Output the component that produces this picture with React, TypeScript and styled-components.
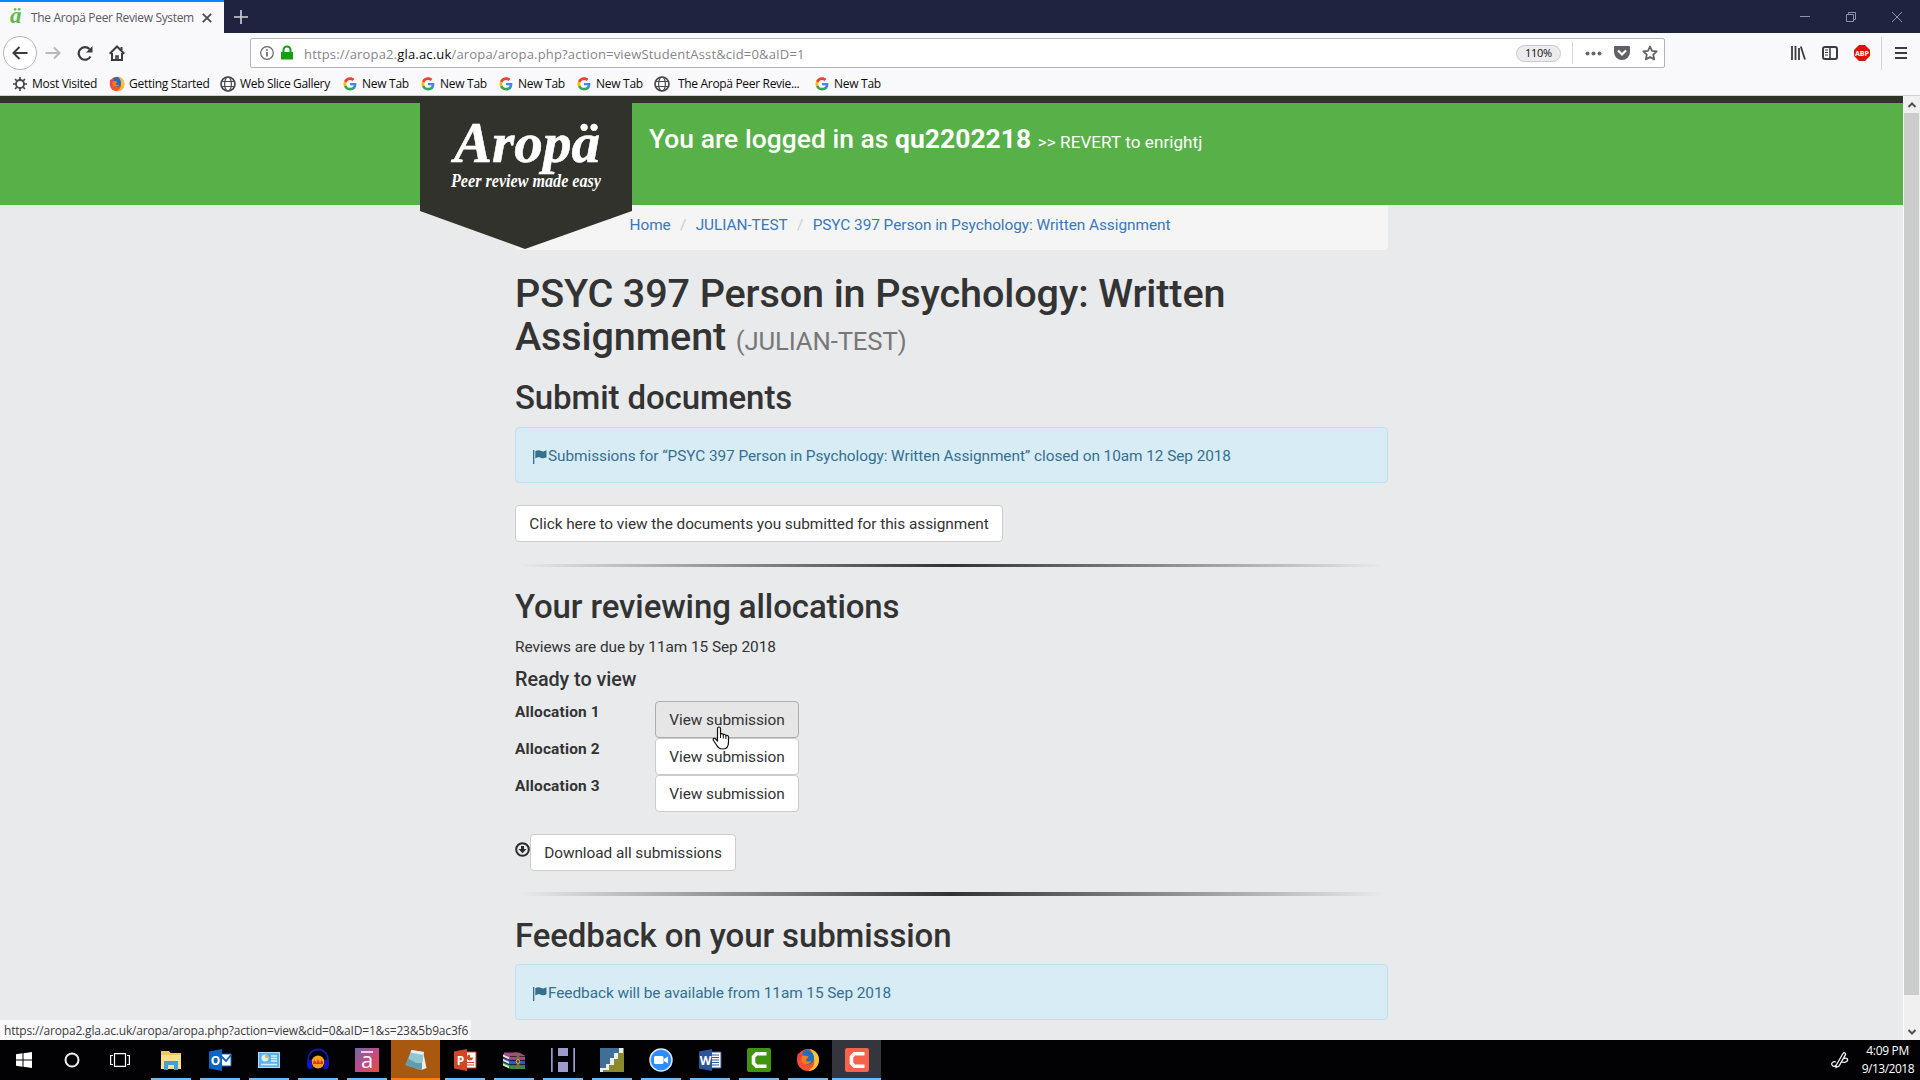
import React from 'react';
import styled, { createGlobalStyle } from 'styled-components';

const Global = createGlobalStyle`
  * { box-sizing: border-box; }
  body { margin: 0; background: #e8eaeb; overflow: hidden; }
  svg { display: block; flex: none; }
`;

const UI = `'Open Sans', 'Noto Sans', sans-serif`;

const Screen = styled.div`
  width: 1920px;
  height: 1080px;
  display: flex;
  flex-direction: column;
  overflow: hidden;
  font-family: Roboto, sans-serif;
`;

/* ---------- browser chrome ---------- */
const TitleBar = styled.div`
  height: 33px;
  flex: none;
  background: #202340;
  display: flex;
  justify-content: space-between;
`;
const TabStrip = styled.div`
  display: flex;
  align-items: center;
`;
const Tab = styled.div`
  width: 224px;
  height: 33px;
  border-top: 2px solid #0a84ff;
  background: #f9f9fb;
  display: flex;
  align-items: center;
  padding: 0 12px 0 10px;
`;
const Favicon = styled.span`
  width: 21px;
  font: italic bold 23px/24px 'Liberation Serif', serif;
  color: #5bb947;
  margin-top: -4px;
`;
const UiText = styled.span<{ $size?: number; $ls?: number; $color?: string }>`
  font-family: ${UI};
  font-size: ${(p) => p.$size ?? 12}px;
  letter-spacing: ${(p) => p.$ls ?? 0}px;
  color: ${(p) => p.$color ?? '#0c0c0d'};
  white-space: pre;
  line-height: 18px;
`;
const TabTitle = styled(UiText)`
  width: 171px;
  margin-top: 1px;
`;
const NewTab = styled.div`
  padding-left: 10px;
`;
const WindowControls = styled.div`
  display: flex;
  align-items: center;
  gap: 36px;
  padding: 1px 18px 0 0;
`;
const NavBar = styled.div`
  height: 39px;
  flex: none;
  background: #f9f9fb;
  display: flex;
  align-items: center;
  padding: 1px 12px 0 3px;
`;
const BackButton = styled.div`
  width: 34px;
  height: 34px;
  border: 1px solid #b5b5b8;
  border-radius: 50%;
  background: #fff;
  display: flex;
  align-items: center;
  justify-content: center;
`;
const NavIcons = styled.div`
  display: flex;
  gap: 16px;
  padding-left: 8px;
  width: 213px;
`;
const UrlBar = styled.div`
  width: 1415px;
  height: 30px;
  border: 1px solid #b4b4b8;
  border-radius: 2px;
  background: #fff;
  display: flex;
  align-items: center;
  padding: 0 6px 0 9px;
`;
const UrlText = styled(UiText)`
  flex: 1;
  padding: 1px 0 0 4px;
  b { font-weight: 400; color: #0c0c0d; }
`;
const Zoom = styled.div`
  width: 45px;
  height: 17px;
  border: 1px solid #c9c9cc;
  border-radius: 9px;
  background: #ececef;
  display: flex;
  align-items: center;
  justify-content: center;
`;
const Divider = styled.div<{ $h: number; $m: string }>`
  width: 1px;
  height: ${(p) => p.$h}px;
  margin: ${(p) => p.$m};
  background: #d5d5d8;
`;
const ToolIcons = styled.div`
  display: flex;
  align-items: center;
  margin-left: auto;
  gap: 16px;
`;
const Bookmarks = styled.div`
  height: 24px;
  flex: none;
  background: #f9f9fb;
  border-bottom: 1px solid #d0d0d3;
  display: flex;
  padding-left: 12px;
`;
const Bookmark = styled.div<{ $w: number; $gap?: number }>`
  width: ${(p) => p.$w}px;
  display: flex;
  align-items: center;
  gap: ${(p) => p.$gap ?? 4}px;
`;

/* ---------- web page ---------- */
const Viewport = styled.div`
  position: relative;
  height: 944px;
  flex: none;
  display: flex;
  background: #e8eaeb;
`;
const Page = styled.div`
  position: relative;
  width: 1903px;
  overflow: hidden;
  letter-spacing: -0.06px;
`;
const Banner = styled.header`
  height: 109px;
  border-top: 7px solid #32322c;
  background: #58b148;
  padding: 20px 0 0 649px;
  color: #fff;
  white-space: nowrap;
`;
const LoggedIn = styled.div`
  font-size: 26.4px;
  line-height: 32px;
  font-weight: 500;
  letter-spacing: 0.05px;
  b { font-weight: 700; }
`;
const Revert = styled.span`
  font-size: 17.1px;
  font-weight: 400;
`;
const LogoMark = styled.svg`
  position: absolute;
  left: 420px;
  top: 0;
  letter-spacing: 0;
`;
const Content = styled.main`
  width: 873px;
  margin-left: 515px;
  color: #333;
  font-size: 15.4px;
  line-height: 22px;
`;
const Breadcrumb = styled.nav`
  height: 45px;
  background: #f5f5f6;
  border-radius: 0 0 4px 4px;
  padding: 9px 0 0 114.500px;
  display: flex;
  white-space: pre;
  color: #ccc;
  a { color: #3a78b9; }
  span { width: 25px; text-align: center; }
`;
const H1 = styled.h1`
  margin: 22px 0 0;
  height: 86px;
  font-size: 39.6px;
  line-height: 43px;
  font-weight: 500;
  letter-spacing: -0.13px;
  small { font-size: 25.7px; font-weight: 400; color: #777; }
`;
const H2 = styled.h2<{ $mt: number }>`
  margin: ${(p) => p.$mt}px 0 0;
  height: 36px;
  font-size: 33px;
  line-height: 36px;
  font-weight: 500;
  letter-spacing: -0.11px;
`;
const Alert = styled.div<{ $mt: number }>`
  margin-top: ${(p) => p.$mt}px;
  height: 56px;
  border: 1px solid #bce0ee;
  border-radius: 4px;
  background: #d8ecf6;
  color: #35708f;
  display: flex;
  align-items: center;
  padding: 2px 0 0 16px;
  letter-spacing: -0.07px;
`;
const Button = styled.button<{ $w: number; $hover?: boolean }>`
  width: ${(p) => p.$w}px;
  height: 37px;
  padding: 0;
  border: 1px solid ${(p) => (p.$hover ? '#adadad' : '#ccc')};
  border-radius: 4px;
  background: ${(p) => (p.$hover ? '#e6e6e6' : '#fff')};
  font: 15.4px/22px Roboto, sans-serif;
  letter-spacing: -0.06px;
  color: #333;
  display: block;
`;
const ButtonRow = styled.div<{ $mt: number }>`
  margin-top: ${(p) => p.$mt}px;
  display: flex;
`;
const Rule = styled.div<{ $mt: number; $h: number }>`
  margin-top: ${(p) => p.$mt}px;
  height: ${(p) => p.$h}px;
  background: linear-gradient(to right, rgba(40, 40, 42, 0) 0.5%, rgba(40, 40, 42, 0.95) 50%, rgba(40, 40, 42, 0) 99.5%);
`;
const Due = styled.p`
  margin: 11px 0 0;
`;
const H4 = styled.h4`
  margin: 11px 0 0;
  font-size: 19.8px;
  line-height: 22px;
  font-weight: 500;
`;
const Allocations = styled.dl`
  margin: 10px 0 0;
  display: grid;
  grid-template-columns: 140px 144px;
  grid-auto-rows: 37px;
  dt { font-weight: 700; line-height: 22px; letter-spacing: 0.18px; }
  dd { margin: 0; }
`;
const Hand = styled.svg`
  position: absolute;
  left: 712px;
  top: 630px;
`;
const StatusUrl = styled.div`
  position: absolute;
  left: 0;
  bottom: 0;
  width: 471px;
  height: 20px;
  padding: 2px 0 0 4px;
  background: #f9f9fb;
  display: flex;
`;
const Scrollbar = styled.div`
  width: 17px;
  background: #f0f0f1;
  border-left: 1px solid #fafafa;
  display: flex;
  flex-direction: column;
  justify-content: space-between;
  align-items: flex-start;
`;
const Thumb = styled.div`
  width: 15px;
  height: 882px;
  margin-bottom: 28px;
  background: #cbcccc;
`;

/* ---------- taskbar ---------- */
const Taskbar = styled.footer`
  height: 40px;
  flex: none;
  background: #020204;
  display: flex;
`;
const SystemButtons = styled.div`
  display: flex;
  width: 146px;
`;
const SystemButton = styled.div`
  width: 48px;
  display: flex;
  align-items: center;
  justify-content: center;
`;
const TaskButton = styled.div<{ $bg?: string; $bar?: string; $wide?: boolean }>`
  width: 49px;
  display: flex;
  flex-direction: column;
  align-items: center;
  justify-content: space-between;
  padding-top: 8px;
  background: ${(p) => p.$bg ?? 'transparent'};
  &::after {
    content: '';
    width: ${(p) => (p.$wide ? 49 : 40)}px;
    height: 2px;
    background: ${(p) => p.$bar ?? '#76b9ed'};
  }
`;
const Tray = styled.div`
  margin-left: auto;
  display: flex;
  align-items: center;
  gap: 13px;
  padding-right: 6px;
`;
const Clock = styled.div`
  display: flex;
  flex-direction: column;
  align-items: flex-end;
`;
const Time = styled(UiText)`
  padding-right: 5px;
`;

const GoogleG = () => (
  <svg width="16" height="16" viewBox="0 0 48 48">
    <path fill="#4285F4" d="M43 24.500c0-1.500-.1-2.600-.4-3.800H24v7.400h10.900c-.5 2.500-2 4.700-4.200 6.200v5.100h6.700C41 36 43 30.800 43 24.500z" />
    <path fill="#34A853" d="M24 43.500c5.400 0 9.900-1.800 13.300-4.900l-6.700-5c-1.800 1.200-4 1.900-6.600 1.900-5.100 0-9.500-3.400-11-8.100H6.200v5.200C9.500 39.100 16.200 43.500 24 43.500z" />
    <path fill="#FBBC05" d="M13 27.400a11.600 11.600 0 0 1 0-7.500v-5.200H6.200a19.600 19.600 0 0 0 0 17.900z" />
    <path fill="#EA4335" d="M24 11.800c2.900 0 5.500 1 7.600 3l5.800-5.700C33.900 5.800 29.400 4 24 4 16.200 4 9.500 8.400 6.200 14.800L13 20c1.500-4.700 5.900-8.200 11-8.200z" />
  </svg>
);
const Globe = () => (
  <svg width="16" height="16" viewBox="0 0 16 16" fill="none" stroke="#4a4a4f">
    <circle cx="8" cy="8" r="7" strokeWidth="1.700" />
    <ellipse cx="8" cy="8" rx="3.400" ry="7" strokeWidth="1.200" />
    <path d="M1.500 5.500h13M1.500 10.500h13" strokeWidth="1.200" />
  </svg>
);
const Firefox = ({ size }: { size: number }) => (
  <svg width={size} height={size} viewBox="0 0 24 24">
    <circle cx="12" cy="12" r="11" fill="#f4512c" />
    <path d="M14 1c6 1.500 9.300 6 9 11.500C22.500 19 17.500 23 12 23c5-3 7-7 6-12-.6-4-2.500-7-4-10z" fill="#ffc22e" />
    <path d="M7 3c4-2 9-1 10.500 4 1.500 5-1 9.500-5.500 9.500-3 0-5-1.500-5.500-3.500l4-1.500-4-3z" fill="#1a6fc4" />
    <path d="M6 8c2-1 3 0 5 0s2 1.500 0 2.500c-1.500.8-1 2.500.5 3 1.500.4 3-.5 4-1-1 3-4 4.500-7 3.500S5 12 6 8z" fill="#f57c1f" />
    <path d="M2 5c1 1 2 1 4 1L3 14C1 11 1 8 2 5z" fill="#ee3f4d" />
  </svg>
);
const Gear = () => (
  <svg width="16" height="16" viewBox="0 0 16 16" fill="none" stroke="#4a4a4f">
    <circle cx="8" cy="8" r="4" strokeWidth="1.800" />
    <path d="M8 1v3M8 12v3M1 8h3M12 8h3M3 3l2.200 2.200M10.800 10.800L13 13M3 13l2.200-2.200M10.800 5.200L13 3" strokeWidth="1.700" />
  </svg>
);
const Flag = () => (
  <svg width="16" height="15" viewBox="0 0 16 15" fill="#35708f">
    <path d="M1 1h1.300v14H1zM3.300 2.300c2-1.500 4-1.300 5.500-.5 1.700.9 3.500.8 5.700-.5v7c-2 1.300-4 1.300-5.700.5-1.500-.7-3.500-.7-5.500.6z" />
  </svg>
);

const bookmarks: Array<[string, string, number, number]> = [
  ['gear', 'Most Visited', 97, -0.28],
  ['fox', 'Getting Started', 111, -0.28],
  ['globe', 'Web Slice Gallery', 122, -0.34],
  ['g', 'New Tab', 78, -0.28],
  ['g', 'New Tab', 78, -0.28],
  ['g', 'New Tab', 78, -0.28],
  ['g', 'New Tab', 78, -0.28],
  ['globe', 'The Aropä Peer Revie...', 160, -0.32],
  ['g', 'New Tab', 78, -0.28],
];
const bookmarkIcon: Record<string, React.ReactNode> = {
  gear: <Gear />,
  fox: <Firefox size={16} />,
  globe: <Globe />,
  g: <GoogleG />,
};

const Camtasia = ({ color }: { color: string }) => (
  <svg width="24" height="24" viewBox="0 0 24 24">
    <rect width="24" height="24" rx="2" fill={color} />
    <path d="M19.500 5.700H9.500l-3 3v6.600l3 3h10" fill="none" stroke="#fff" strokeWidth="3.600" />
  </svg>
);

const Office = ({ color, letter, word }: { color: string; letter: string; word?: boolean }) => (
  <svg width="24" height="24" viewBox="0 0 24 24">
    <path d="M12 4h11v16H12z" fill="#fff" stroke={color} />
    {word ? (
      <path d="M14 7h7M14 9.500h7M14 12h7M14 14.500h7M14 17h7" stroke={color} strokeWidth="1.200" />
    ) : (
      <g>
        <path d="M17 6.500a3 3 0 1 0 3 3h-3z" fill={color} />
        <path d="M14 14.500h7M14 17h7" stroke={color} strokeWidth="1.200" />
      </g>
    )}
    <path d="M1 3.500L14 1v22L1 20.500z" fill={color} />
    <text x="7.500" y="16.500" fontFamily="Open Sans, sans-serif" fontWeight="700" fontSize="12" fill="#fff" textAnchor="middle">{letter}</text>
  </svg>
);

const apps: Array<{ icon: React.ReactNode; bg?: string; bar?: string }> = [
  {
    icon: (
      <svg width="24" height="24" viewBox="0 0 24 24">
        <path d="M2 3h8l1.500 2H22v16H2z" fill="#f0c95c" />
        <path d="M2 7h20v14H2z" fill="#fbe08a" />
        <path d="M5 22v-9h14v9h-4v-5H9v5z" fill="#3fa0dc" />
      </svg>
    ),
  },
  {
    icon: (
      <svg width="24" height="24" viewBox="0 0 24 24">
        <path d="M12 6h11v12H12z" fill="#fff" stroke="#0a64c4" />
        <path d="M13 8l5 5 5-6" stroke="#0a64c4" strokeWidth="1.800" fill="none" />
        <path d="M1 3.500L14 1v22L1 20.500z" fill="#0a64c4" />
        <text x="7.500" y="16.500" fontFamily="Open Sans, sans-serif" fontWeight="700" fontSize="12" fill="#fff" textAnchor="middle">O</text>
      </svg>
    ),
  },
  {
    icon: (
      <svg width="24" height="24" viewBox="0 0 24 24">
        <rect x="1.500" y="4.500" width="21" height="15" fill="#58b4ee" stroke="#a8dcfa" />
        <circle cx="8" cy="10" r="3.500" fill="#d9f0fd" />
        <path d="M8 10V6.500A3.500 3.500 0 0 1 11.500 10z" fill="#f2b04a" />
        <path d="M14 8h6M14 10.500h6M14 13h6M4 16.500h16" stroke="#d9f0fd" strokeWidth="1.300" />
      </svg>
    ),
  },
  {
    icon: (
      <svg width="24" height="24" viewBox="0 0 24 24">
        <circle cx="12" cy="14" r="6.500" fill="#f6a21c" />
        <path d="M7 14l1.500-2 2 3 1.500-4 2 4 1.500-3 1.500 2v2H7z" fill="#e0301e" />
        <path d="M2.500 15C.500 7 6 1.500 12 1.500S23.500 7 21.500 15" fill="none" stroke="#1418a8" strokeWidth="1.800" />
        <path d="M1 13c2-2.500 4-1.500 4.500 0l1.500 7c-3 2.500-7 1-6-7zM23 13c-2-2.500-4-1.500-4.500 0L17 20c3 2.500 7 1 6-7z" fill="#1414c0" />
      </svg>
    ),
  },
  {
    icon: (
      <svg width="24" height="24" viewBox="0 0 24 24">
        <defs>
          <linearGradient id="ink" x1="0" y1="0" x2="1" y2="1">
            <stop offset="0" stopColor="#6e6aa8" />
            <stop offset=".5" stopColor="#c04b86" />
            <stop offset="1" stopColor="#e2503c" />
          </linearGradient>
        </defs>
        <rect width="24" height="24" fill="url(#ink)" />
        <text x="12" y="19.500" fontFamily="Open Sans, sans-serif" fontSize="22" fill="#fff" textAnchor="middle">a</text>
        <path d="M6 4h12" stroke="#fff" strokeWidth="1.500" />
      </svg>
    ),
  },
  {
    bg: '#a8590f',
    bar: '#ff7d0a',
    icon: (
      <svg width="24" height="24" viewBox="0 0 24 24">
        <path d="M19 3l3.500 17-5 2z" fill="#e8eef0" />
        <path d="M7.500 2L20 4l-3.500 18L1.500 17z" fill="#8fc6d2" />
        <path d="M7.500 2L20 4l-.8 3L6.500 4.500z" fill="#e4f1f2" />
        <path d="M1.500 17L4 10.500l8 4.500 6 0-1.500 7z" fill="#5f9eae" />
      </svg>
    ),
  },
  { icon: <Office color="#d24625" letter="P" /> },
  {
    icon: (
      <svg width="24" height="24" viewBox="0 0 24 24">
        <path d="M2 4.500h15l6 3v4.500H8L1 9z" fill="#9c4f86" />
        <path d="M1 9.500l7 3h15v4H8l-7-3z" fill="#3355c0" />
        <path d="M1 14l7 3h15v4H8l-7-3.500z" fill="#2e8f3c" />
        <path d="M1 6.500l6 2.700v2L1 8.500M1 11l6 2.700v2L1 13M1 15.500l6 2.700v2l-6-2.700" fill="#e9e4dc" />
        <path d="M8 8.500h15M8 12.300h15M8 16.700h15" stroke="#1b1b22" strokeWidth=".8" />
        <path d="M12 4.500h2.500l3 4V21h-2.800V8.500z" fill="#8a6a35" />
        <circle cx="16" cy="13.500" r="1.800" fill="#4a3a1c" stroke="#d9b95a" />
      </svg>
    ),
  },
  {
    icon: (
      <svg width="24" height="24" viewBox="0 0 24 24" fill="#9c9ccc">
        <path d="M0 0h1.700v24H0zM22.300 0H24v24h-1.700zM7 0h10v8H7zM7 14h10v10H7z" />
      </svg>
    ),
  },
  {
    icon: (
      <svg width="24" height="24" viewBox="0 0 24 24">
        <rect width="24" height="24" fill="#8b8a2c" />
        <path d="M0 0h20v5h-5v5h-4v7H6v4H0z" fill="#3f6f96" />
        <path d="M19 0h4v5h-5v6h-4v6H9v5H3v2H0v-4h6v-4h4v-6h4V5h5z" fill="#e9eef0" />
      </svg>
    ),
  },
  {
    icon: (
      <svg width="24" height="24" viewBox="0 0 24 24">
        <circle cx="12" cy="12" r="11" fill="#2d8cff" stroke="#d9e9fb" strokeWidth="1.500" />
        <rect x="5" y="8" width="9.500" height="8" rx="1.500" fill="#fff" />
        <path d="M15 11l4-2.500v7L15 13z" fill="#fff" />
      </svg>
    ),
  },
  { icon: <Office color="#2a5699" letter="W" word /> },
  { icon: <Camtasia color="#3f9412" /> },
  { icon: <Firefox size={24} /> },
  { icon: <Camtasia color="#f6624b" />, bg: '#35363d' },
];

export default function App() {
  return (
    <Screen>
      <Global />
      <TitleBar>
        <TabStrip>
          <Tab>
            <Favicon>ä</Favicon>
            <TabTitle $ls={-0.33} $color="#5a5a60">The Aropä Peer Review System</TabTitle>
            <svg width="10" height="10" viewBox="0 0 10 10" stroke="#4a4a4f" strokeWidth="1.800"><path d="M.8.8l8.400 8.400M9.200.8L.8 9.200" /></svg>
          </Tab>
          <NewTab>
            <svg width="14" height="14" viewBox="0 0 14 14" stroke="#d4d4dc" strokeWidth="1.600"><path d="M7 0v14M0 7h14" /></svg>
          </NewTab>
        </TabStrip>
        <WindowControls>
          <svg width="10" height="10" viewBox="0 0 10 10" stroke="#8d93ad"><path d="M0 4.500h10" /></svg>
          <svg width="10" height="10" viewBox="0 0 10 10" fill="none" stroke="#8d93ad"><path d="M.5 2.500h7v7h-7zM2.500 2.500v-2h7v7h-2" /></svg>
          <svg width="10" height="10" viewBox="0 0 10 10" stroke="#8d93ad"><path d="M0 0l10 10M10 0L0 10" /></svg>
        </WindowControls>
      </TitleBar>

      <NavBar>
        <BackButton>
          <svg width="16" height="14" viewBox="0 0 16 14" fill="none" stroke="#3c3c40" strokeWidth="2"><path d="M15.500 7H1.500M7.500 1l-6 6 6 6" /></svg>
        </BackButton>
        <NavIcons>
          <svg width="16" height="16" viewBox="0 0 16 16" fill="none" stroke="#b8b8bb" strokeWidth="2"><path d="M.5 8h14M9 2.500L14.500 8 9 13.500" /></svg>
          <svg width="16" height="16" viewBox="0 0 16 16" fill="none" stroke="#3c3c40" strokeWidth="2.200"><path d="M13.500 11.500A6.300 6.300 0 1 1 12.500 4" /><path d="M15.500 1v6.500H9z" fill="#3c3c40" stroke="none" /></svg>
          <svg width="16" height="16" viewBox="0 0 16 16" fill="none" stroke="#3c3c40" strokeWidth="2"><path d="M.7 8.700L8 1.500l7.300 7.200M3 8v7h10V8" /><path d="M7 15v-4h2v4" strokeWidth="1.600" /><path d="M12.500 2v3" /></svg>
        </NavIcons>
        <UrlBar>
          <svg width="14" height="14" viewBox="0 0 14 14" fill="none" stroke="#66666b"><circle cx="7" cy="7" r="6.300" strokeWidth="1.200" /><path d="M7 6v4.500M7 3.300v1.500" strokeWidth="1.700" /></svg>
          <svg width="26" height="16" viewBox="0 0 26 16"><path d="M7 7h12v7.500H7z" fill="#12a012" /><path d="M9.500 8V5a3.500 3.500 0 0 1 7 0v3" fill="none" stroke="#12a012" strokeWidth="2" /></svg>
          <UrlText $size={13} $ls={0.17} $color="#85858a">https://aropa2.<b>gla.ac.uk</b>/aropa/aropa.php?action=viewStudentAsst&amp;cid=0&amp;aID=1</UrlText>
          <Zoom><UiText $size={11} $ls={-0.3}>110%</UiText></Zoom>
          <Divider $h={22} $m="0 12px 0 11px" />
          <svg width="17" height="5" viewBox="0 0 17 5" fill="#66666b"><circle cx="2.500" cy="2.500" r="2" /><circle cx="8.500" cy="2.500" r="2" /><circle cx="14.500" cy="2.500" r="2" /></svg>
          <svg width="40" height="16" viewBox="0 0 40 16"><path d="M13 1h14a1 1 0 0 1 1 1v5a8 8 0 0 1-16 0V2a1 1 0 0 1 1-1z" fill="#606065" /><path d="M16 5.500l4 4 4-4" fill="none" stroke="#fff" strokeWidth="2.200" /></svg>
          <svg width="16" height="16" viewBox="0 0 16 16"><path d="M8 1.500l2 4.400 4.700.5-3.500 3.200 1 4.800L8 12l-4.200 2.400 1-4.800L1.300 6.400 6 5.900z" fill="none" stroke="#606065" strokeWidth="1.800" strokeLinejoin="round" /></svg>
        </UrlBar>
        <ToolIcons>
          <svg width="16" height="16" viewBox="0 0 16 16" stroke="#3c3c40" strokeWidth="1.800"><path d="M2.500 1v14M6 1v14M9.500 3v12M11.300 1.500l4.200 13" transform="translate(-.5 0)" /></svg>
          <svg width="16" height="16" viewBox="0 0 16 16" fill="none" stroke="#3c3c40"><rect x="1" y="2" width="14" height="12" rx="2" strokeWidth="2" /><path d="M8 2v12" strokeWidth="1.600" /><path d="M3 5h3M3 7.500h3M3 10h3" /></svg>
          <svg width="16" height="16" viewBox="0 0 16 16"><path d="M5 0h6l5 5v6l-5 5H5l-5-5V5z" fill="#d9150b" /><text x="8" y="11" textAnchor="middle" fontFamily="Open Sans, sans-serif" fontWeight="700" fontSize="7.500" textLength="14" lengthAdjust="spacingAndGlyphs" fill="#fff">ABP</text></svg>
          <Divider $h={33} $m="0 -4px 0 -5px" />
          <svg width="14" height="14" viewBox="0 0 14 14" stroke="#3c3c40" strokeWidth="2"><path d="M1 2h12M1 7h12M1 12h12" /></svg>
        </ToolIcons>
      </NavBar>

      <Bookmarks>
        {bookmarks.map(([icon, label, w, ls], i) => (
          <Bookmark key={i} $w={w} $gap={i === 7 ? 8 : 4}>
            {bookmarkIcon[icon]}
            <UiText $ls={ls}>{label}</UiText>
          </Bookmark>
        ))}
      </Bookmarks>

      <Viewport>
        <Page>
          <Banner>
            <LoggedIn>You are logged in as <b>qu2202218</b> <Revert>&gt;&gt; REVERT to enrightj</Revert></LoggedIn>
          </Banner>
          <Content>
            <Breadcrumb>
              <a>Home</a><span>/</span><a>JULIAN-TEST</a><span>/</span><a>PSYC 397 Person in Psychology: Written Assignment</a>
            </Breadcrumb>
            <H1>PSYC 397 Person in Psychology: Written Assignment <small>(JULIAN-TEST)</small></H1>
            <H2 $mt={22}>Submit documents</H2>
            <Alert $mt={11}><Flag />Submissions for “PSYC 397 Person in Psychology: Written Assignment” closed on 10am 12 Sep 2018</Alert>
            <ButtonRow $mt={22}><Button $w={488}>Click here to view the documents you submitted for this assignment</Button></ButtonRow>
            <Rule $mt={22} $h={3} />
            <H2 $mt={22}>Your reviewing allocations</H2>
            <Due>Reviews are due by 11am 15 Sep 2018</Due>
            <H4>Ready to view</H4>
            <Allocations>
              {[1, 2, 3].map((n) => (
                <React.Fragment key={n}>
                  <dt>Allocation {n}</dt>
                  <dd><Button $w={144} $hover={n === 1}>View submission</Button></dd>
                </React.Fragment>
              ))}
            </Allocations>
            <ButtonRow $mt={22}>
              <svg width="15" height="30" viewBox="0 0 15 30" fill="none" stroke="#2b2b2b"><circle cx="7.500" cy="15.500" r="6.300" strokeWidth="2" /><path d="M7.500 12v3" strokeWidth="3" /><path d="M3.500 15h8l-4 4.300z" fill="#2b2b2b" stroke="none" /></svg>
              <Button $w={206}>Download all submissions</Button>
            </ButtonRow>
            <Rule $mt={21} $h={4} />
            <H2 $mt={22}>Feedback on your submission</H2>
            <Alert $mt={10}><Flag />Feedback will be available from 11am 15 Sep 2018</Alert>
          </Content>
          <LogoMark width="212" height="154" viewBox="0 0 212 154">
            <path d="M0 0h212v115l-107 38L0 115z" fill="#32322c" />
            <g fill="#fff" fontFamily="Liberation Serif, serif" fontWeight="700" fontStyle="italic">
              <text x="34" y="66" fontSize="58" textLength="146" lengthAdjust="spacingAndGlyphs" stroke="#fff" strokeWidth=".6">Aropä</text>
              <text x="31" y="90.500" fontSize="18" textLength="150" lengthAdjust="spacingAndGlyphs">Peer review made easy</text>
            </g>
          </LogoMark>
        </Page>
        <Scrollbar>
          <svg width="17" height="17" viewBox="0 0 17 17" fill="none" stroke="#505050" strokeWidth="2"><path d="M4.500 11L8 7.500l3.500 3.500" /></svg>
          <Thumb />
          <svg width="17" height="17" viewBox="0 0 17 17" fill="none" stroke="#505050" strokeWidth="2"><path d="M4.500 7L8 10.500 11.500 7" /></svg>
        </Scrollbar>
        <Hand width="20" height="25" viewBox="0 0 20 25">
          <path d="M5.500 2.500c0-2 3-2 3 0v6c.5-1.500 2.700-1 2.800.5.500-1 2.500-.6 2.600.8.700-.8 2.600-.3 2.600 1.200v5c0 4-1.500 7-5.500 7-3.500 0-5-1-6.500-4L1.500 14.500c-1-2 .8-3 2.200-1.500l1.800 2z" fill="#fff" stroke="#111" strokeWidth="1.200" strokeLinejoin="round" />
          <path d="M8.500 8v4M11.300 9v3.500M13.900 10v3" stroke="#111" />
        </Hand>
        <StatusUrl><UiText $ls={-0.18} $color="#3c3c40">https://aropa2.gla.ac.uk/aropa/aropa.php?action=view&amp;cid=0&amp;aID=1&amp;s=23&amp;5b9ac3f6</UiText></StatusUrl>
      </Viewport>

      <Taskbar>
        <SystemButtons>
          <SystemButton>
            <svg width="16" height="16" viewBox="0 0 16 16" fill="#fff"><path d="M0 2.300l6.500-1v6.200H0zM7.500 1.200L16 0v7.500H7.500zM0 8.500h6.500v6.200l-6.500-1zM7.500 8.500H16V16l-8.500-1.200z" /></svg>
          </SystemButton>
          <SystemButton>
            <svg width="16" height="16" viewBox="0 0 16 16"><circle cx="8" cy="8" r="6.500" fill="none" stroke="#f0f0f0" strokeWidth="2" /></svg>
          </SystemButton>
          <SystemButton>
            <svg width="20" height="14" viewBox="0 0 20 14" fill="none" stroke="#fff" strokeWidth="1.200"><path d="M4.500.6h11v12.800h-11zM3 2.500H.6v9H3M17 2.500h2.400v9H17" /></svg>
          </SystemButton>
        </SystemButtons>
        {apps.map((a, i) => (
          <TaskButton key={i} $bg={a.bg} $bar={a.bar} $wide={!!a.bg}>{a.icon}</TaskButton>
        ))}
        <Tray>
          <svg width="18" height="18" viewBox="0 0 18 18" fill="none" stroke="#f2f2f2" strokeWidth="1.300"><path d="M5 14.500L12 2.500c1-1.500 3.200-.4 2.400 1.400L8 15l-3 1.500zM5 11c-3-1-5 1-4 3s3 1.500 4 0M12 8c3-2 5 0 4.500 1.500S13 12 11 11" /></svg>
          <Clock>
            <Time $ls={-0.3} $color="#fff">4:09 PM</Time>
            <UiText $ls={-0.5} $color="#fff">9/13/2018</UiText>
          </Clock>
        </Tray>
      </Taskbar>
    </Screen>
  );
}
